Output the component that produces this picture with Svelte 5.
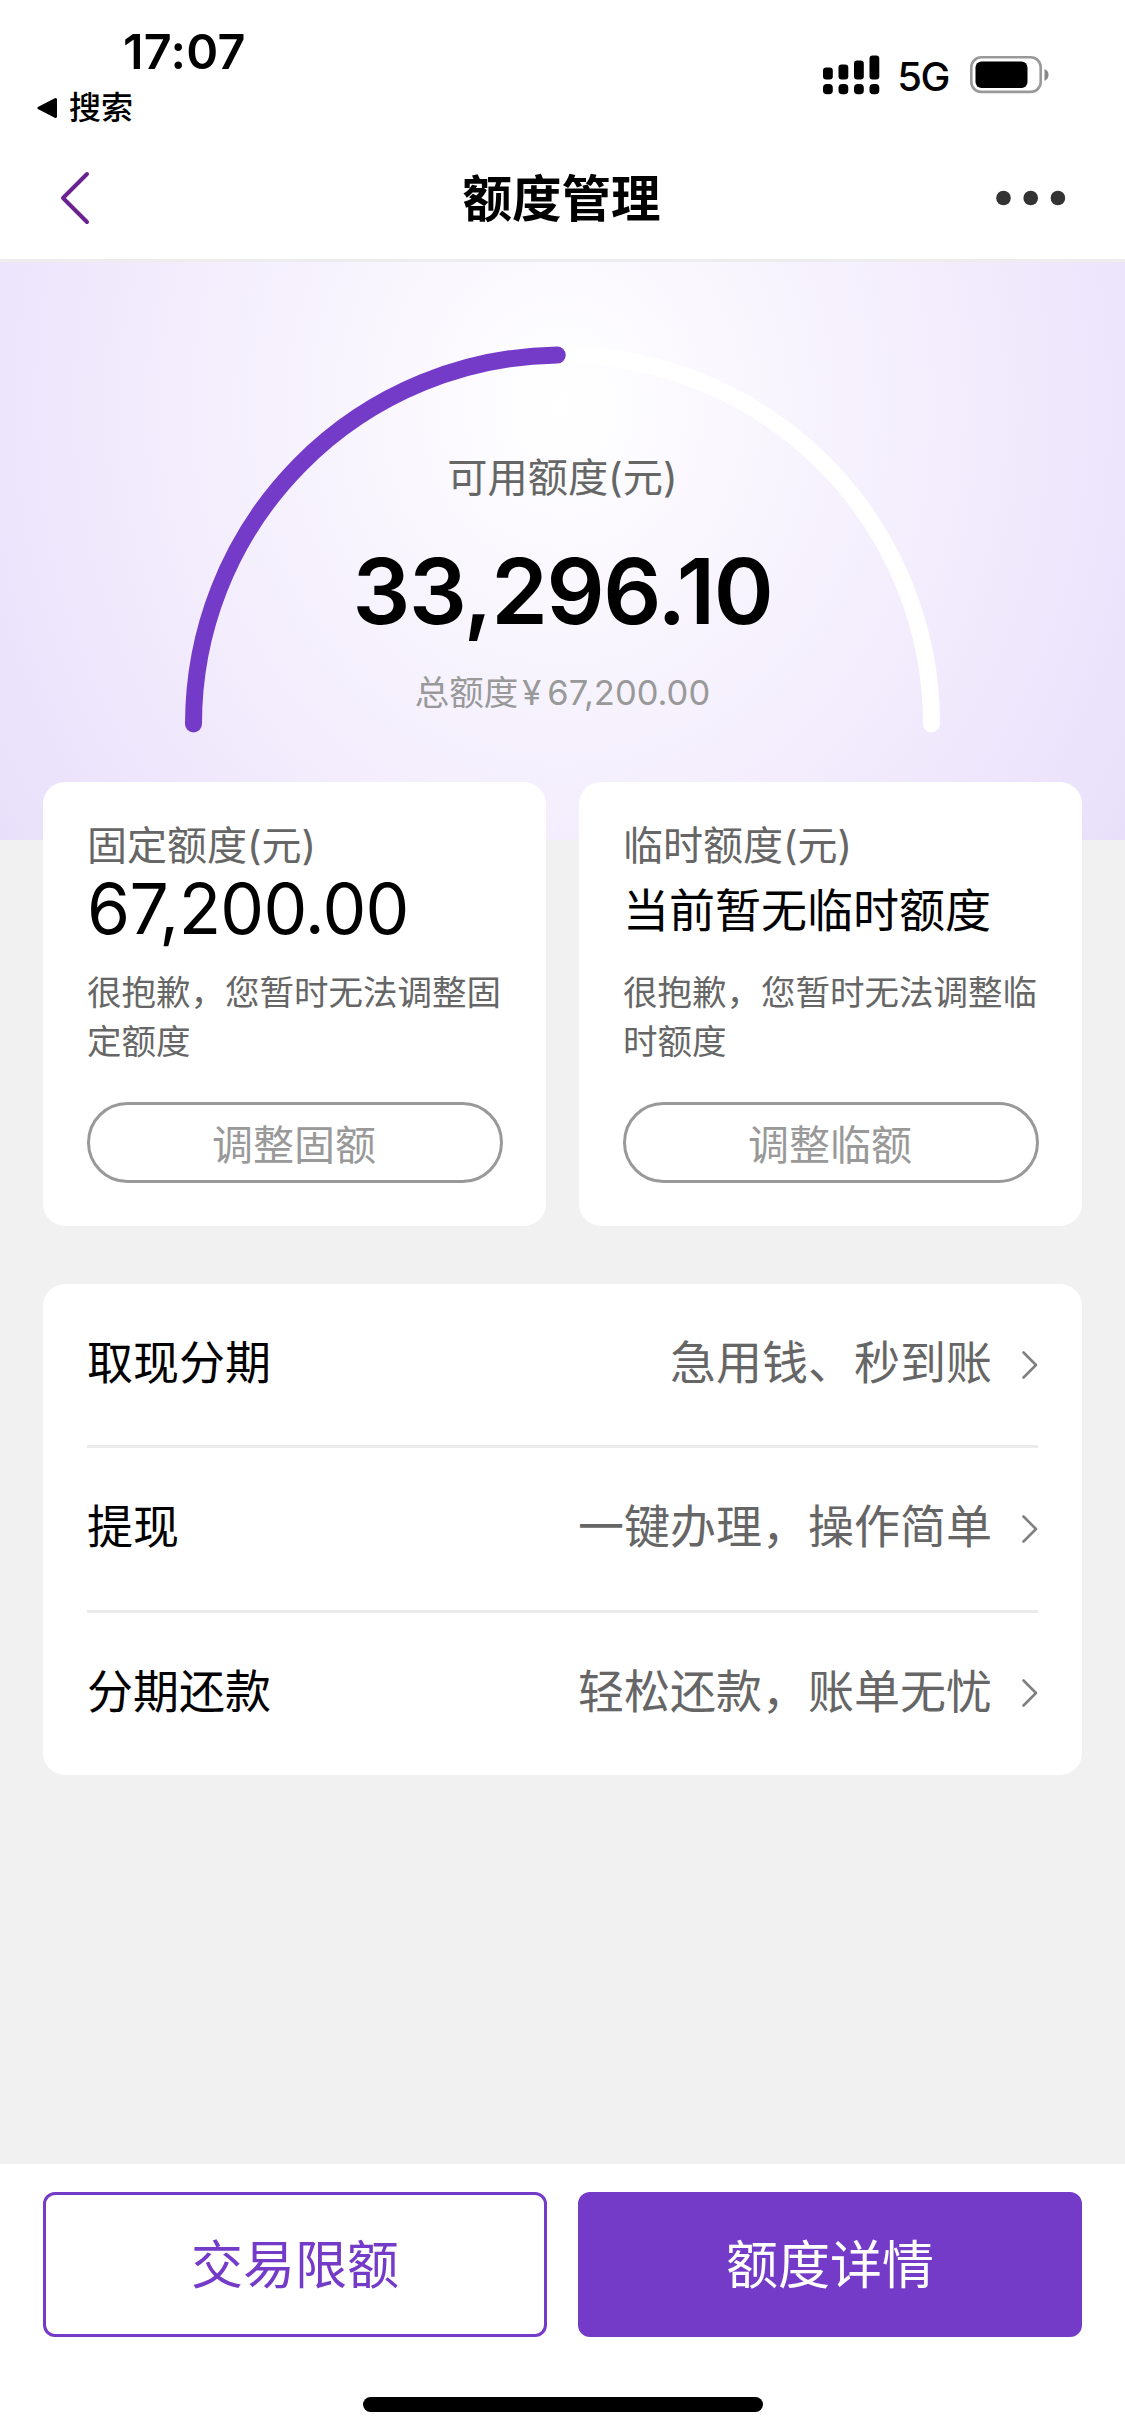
<script lang="ts">
  interface Quota {
    title: string;
    value: string;
    plain?: boolean;
    note: string;
    action: string;
  }

  const available = 33296.1;
  const total = 67200;

  const quotas: Quota[] = [
    { title: '固定额度(元)', value: format(total), note: '很抱歉，您暂时无法调整固定额度', action: '调整固额' },
    { title: '临时额度(元)', value: '当前暂无临时额度', plain: true, note: '很抱歉，您暂时无法调整临时额度', action: '调整临额' }
  ];

  const services = [
    { name: '取现分期', hint: '急用钱、秒到账' },
    { name: '提现', hint: '一键办理，操作简单' },
    { name: '分期还款', hint: '轻松还款，账单无忧' }
  ];

  const signal = [12, 15, 19, 24];

  // the gauge is a half circle, filled from the left end
  const cx = 562.5;
  const cy = 462;
  const r = 369;
  const angle = Math.PI * (available / total);
  const endX = cx - r * Math.cos(angle);
  const endY = cy - r * Math.sin(angle);

  function format(n: number) {
    return n.toLocaleString('en-US', { minimumFractionDigits: 2 });
  }
</script>

<div class="screen">
  <div class="status-bar">
    <div class="status-left">
      <div class="time">17:07</div>
      <div class="return-app">
        <svg width="20" height="22" viewBox="0 0 20 22">
          <path d="M2 11 L18.5 2.5 V19.5 Z" stroke="#000" stroke-width="3" stroke-linejoin="round" />
        </svg>
        <span>搜索</span>
      </div>
    </div>
    <div class="status-right">
      <svg width="57" height="40" viewBox="0 0 57 40">
        {#each signal as h, i (i)}
          <rect x={i * 15.5} y={24.5 - h} width="9.8" height={h} rx="3.2" />
          <rect x={i * 15.5} y="29" width="9.8" height="10.3" rx="3.8" />
        {/each}
      </svg>
      <span class="network">5G</span>
      <svg width="79" height="38" viewBox="0 0 79 38">
        <rect x="1.3" y="1.3" width="69.4" height="34.6" rx="10" fill="none" stroke="#999" stroke-width="2.6" />
        <rect x="5.5" y="5.5" width="52" height="26.5" rx="6" />
        <path d="M74.5 13 Q78.5 14.5 78.5 18.8 T74.5 25 Z" fill="#888" />
      </svg>
    </div>
  </div>

  <header class="nav">
    <svg class="back" width="70" height="54" viewBox="0 0 70 54">
      <path d="M27 3 L3 27 L27 51" fill="none" stroke="#6b2291" stroke-width="4" stroke-linecap="round" stroke-linejoin="round" />
    </svg>
    <h1>额度管理</h1>
    <svg class="more" width="70" height="16" viewBox="0 0 70 16" fill="#333">
      <circle cx="7.5" cy="8" r="7.3" />
      <circle cx="34.7" cy="8" r="7.3" />
      <circle cx="61.9" cy="8" r="7.3" />
    </svg>
  </header>

  <section class="hero">
    <svg class="gauge" width="1125" height="578" viewBox="0 0 1125 578">
      <path d="M{cx - r} {cy} A{r} {r} 0 0 1 {cx + r} {cy}" stroke="#fff" />
      <path d="M{cx - r} {cy} A{r} {r} 0 0 1 {endX} {endY}" stroke="#743ac8" />
    </svg>
    <div class="hero-label">可用额度(元)</div>
    <div class="hero-amount">{format(available)}</div>
    <div class="hero-total">总额度<span>¥</span>{format(total)}</div>
  </section>

  <main>
    <div class="quotas">
      {#each quotas as quota (quota.title)}
        <section class="quota">
          <h2>{quota.title}</h2>
          <div class="value" class:plain={quota.plain}>{quota.value}</div>
          <p>{quota.note}</p>
          <button>{quota.action}</button>
        </section>
      {/each}
    </div>

    <ul class="services">
      {#each services as service (service.name)}
        <li>
          <span class="name">{service.name}</span>
          <span class="hint">{service.hint}</span>
          <svg width="18" height="30" viewBox="0 0 18 30">
            <path d="M3.5 2.5 L16 15 L3.5 27.5" fill="none" stroke="#808080" stroke-width="2.6" stroke-linecap="round" stroke-linejoin="round" />
          </svg>
        </li>
      {/each}
    </ul>
  </main>

  <footer>
    <div class="actions">
      <button class="outline">交易限额</button>
      <button class="solid">额度详情</button>
    </div>
    <div class="home-bar"></div>
  </footer>
</div>

<style>
  :global(body) {
    margin: 0;
  }

  .screen {
    display: flex;
    flex-direction: column;
    box-sizing: border-box;
    width: 1125px;
    height: 2435px;
    overflow: hidden;
    background: #f1f1f1;
    color: #000;
    font-family: Inter, 'Noto Sans CJK SC', sans-serif;
  }

  h1,
  h2,
  p,
  ul {
    margin: 0;
    padding: 0;
    font-weight: 400;
  }

  button {
    box-sizing: border-box;
    padding: 0;
    font-family: inherit;
  }

  .status-bar {
    display: flex;
    justify-content: space-between;
    height: 136px;
    background: #fff;
  }

  .time {
    padding: 22px 0 0 123px;
    font-size: 48.5px;
    line-height: 60px;
    font-weight: 600;
    letter-spacing: 0.3px;
  }

  .return-app {
    display: flex;
    align-items: center;
    gap: 12px;
    padding: 2px 0 0 37px;
    font-size: 32px;
    line-height: 48px;
    font-weight: 500;
  }

  .status-right {
    display: flex;
    align-items: center;
    height: 40px;
    padding: 55px 76px 0 0;
  }

  .network {
    margin: 3px 21px 0 17px;
    font-size: 40px;
    line-height: 40px;
    font-weight: 500;
    letter-spacing: -1.5px;
  }

  .nav {
    display: flex;
    align-items: center;
    justify-content: space-between;
    box-sizing: border-box;
    height: 126px;
    padding: 0 59px 0 60px;
    background: #fff;
    border-bottom: 3px solid #ededee;
  }

  h1 {
    padding: 2px 3px 0 0;
    font-size: 49.5px;
    line-height: 60px;
    font-weight: 700;
  }

  .hero {
    position: relative;
    flex: none;
    height: 578px;
    background: radial-gradient(ellipse 700px 800px at 50% 25%, #fff 0%, #f3edfd 55%, #ede5fc 80%, #e8defa 100%);
    text-align: center;
  }

  .gauge {
    position: absolute;
    inset: 0;
    fill: none;
    stroke-width: 17px;
    stroke-linecap: round;
  }

  .hero-label,
  .hero-amount,
  .hero-total {
    position: relative;
  }

  .hero-label {
    padding-top: 186px;
    font-size: 40.2px;
    line-height: 60px;
    color: #666;
  }

  .hero-amount {
    padding-top: 28px;
    font-size: 91px;
    line-height: 110px;
    font-weight: 600;
    letter-spacing: -1.4px;
  }

  .hero-total {
    padding-top: 22px;
    font-size: 34.5px;
    line-height: 50px;
    color: #999;
  }

  .hero-total span {
    margin: 0 6px 0 4px;
  }

  main {
    position: relative;
    flex: 1;
    margin-top: -58px;
    padding: 0 43px;
  }

  .quotas {
    display: grid;
    grid-template-columns: 1fr 1fr;
    gap: 33px;
  }

  .quota {
    box-sizing: border-box;
    height: 444px;
    padding: 34px 43px 0 44px;
    background: #fff;
    border-radius: 22px;
  }

  h2 {
    font-size: 40px;
    line-height: 60px;
    color: #666;
  }

  .value {
    height: 67px;
    font-size: 69.5px;
    line-height: 67px;
    letter-spacing: -0.7px;
  }

  .value.plain {
    padding-top: 1px;
    height: 66px;
    font-size: 46px;
    letter-spacing: 0;
  }

  .quota p {
    padding-top: 25px;
    font-size: 34.5px;
    line-height: 49px;
    color: #666;
  }

  .quota button {
    display: block;
    width: 100%;
    height: 81px;
    margin-top: 36px;
    padding: 0 2px 2px 0;
    background: #fff;
    border: 3px solid #999;
    border-radius: 41px;
    font-size: 41px;
    color: #999;
  }

  .services {
    height: 491px;
    margin-top: 58px;
    padding: 0 44px;
    box-sizing: border-box;
    list-style: none;
    background: #fff;
    border-radius: 22px;
  }

  .services li {
    display: flex;
    align-items: center;
    box-sizing: border-box;
    height: 164.3px;
    font-size: 46px;
    line-height: 60px;
    border-bottom: 3px solid #ebebeb;
  }

  .services li:last-child {
    border-bottom-color: transparent;
  }

  .name,
  .hint {
    padding-bottom: 5px;
  }

  .name {
    flex: 1;
  }

  .hint {
    margin-right: 28px;
    color: #666;
  }

  footer {
    box-sizing: border-box;
    height: 271px;
    padding: 28px 43px 0;
    background: #fff;
  }

  .actions {
    display: grid;
    grid-template-columns: 1fr 1fr;
    gap: 31px;
  }

  .actions button {
    height: 145px;
    padding-bottom: 6px;
    border: 3px solid #743ac8;
    border-radius: 12px;
    font-size: 52px;
  }

  .outline {
    background: #fff;
    color: #743ac8;
  }

  .solid {
    background: #743ac8;
    color: #fff;
  }

  .home-bar {
    width: 400px;
    height: 15px;
    margin: 60px auto 0;
    background: #000;
    border-radius: 8px;
  }
</style>
